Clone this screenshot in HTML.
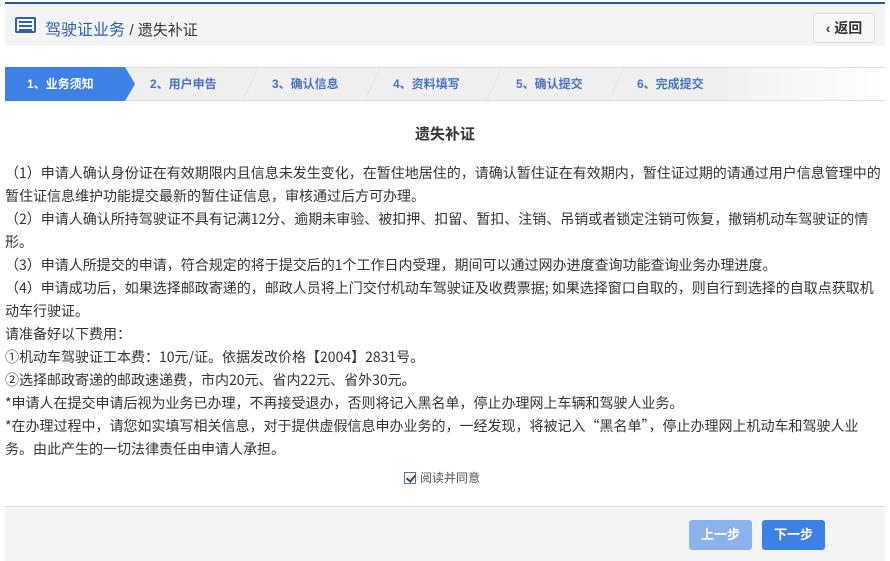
<!DOCTYPE html>
<html><head><meta charset="utf-8"><style>
*{margin:0;padding:0;box-sizing:border-box}
body{width:890px;height:561px;background:#fff;font-family:"Liberation Sans","Noto Sans CJK SC",sans-serif;position:relative;overflow:hidden}
.top{position:absolute;left:5px;top:2px;width:880px;height:2px;background:#2b56a8}
.hdr{position:absolute;left:5px;top:4px;width:880px;height:42px;background:#f4f4f4}
.hdr .ic{position:absolute;left:10px;top:13px;width:21px;height:16px;border:2px solid #2e5fb0;border-radius:2px;background:#fff}
.hdr .ic i{position:absolute;left:2px;width:13px;height:2px;background:#2e5fb0}
.hdr .t{position:absolute;left:40px;top:12px;font-size:16px;color:#2e5fb0}
.hdr .t span{color:#333;font-size:15px}
.back{position:absolute;left:808px;top:9px;width:62px;height:30px;border:1px solid #ddd;border-radius:3px;background:#f8f8f8;font-size:14px;font-weight:bold;color:#333;text-align:center;line-height:28px}
.steps{position:absolute;left:5px;top:67px;width:880px;height:34px;background:linear-gradient(to right,#efefef 80%,#fff);border-top:1px solid #ddd;border-bottom:1px solid #ddd}
.st{position:absolute;top:0;height:32px;line-height:32px;font-size:12px;font-weight:bold;color:#4a72c0}
.s1{position:absolute;left:0;top:-1px;width:120px;height:34px;background:#3d80e6;color:#fff;font-size:12px;font-weight:bold;line-height:34px;padding-left:22px}
.s1:after{content:"";position:absolute;right:-10px;top:0;border-left:10px solid #3d80e6;border-top:17px solid transparent;border-bottom:17px solid transparent}
.sep{position:absolute;top:0;width:1px;height:32px;background:#e4e4e4;transform:skewX(-25deg)}
h2{position:absolute;top:123px;left:0;width:890px;text-align:center;font-size:15px;font-weight:bold;color:#333}
.txt{position:absolute;left:5px;top:162px;width:880px;font-size:14px;line-height:23px;color:#333;font-family:"Noto Sans CJK SC","Liberation Sans",sans-serif}
.chk{position:absolute;left:404px;top:469px;font-size:12px;color:#555}
.chk b{display:inline-block;width:12px;height:12px;border:1px solid #4a72c0;vertical-align:-2px;margin-right:4px;position:relative}
.chk b:after{content:"";position:absolute;left:3px;top:0;width:4px;height:7px;border-right:2px solid #444;border-bottom:2px solid #444;transform:rotate(40deg)}
.foot{position:absolute;left:5px;top:506px;width:880px;height:55px;background:#f4f4f4;border-top:1px solid #ddd}
.btn{position:absolute;top:13px;width:63px;height:30px;border-radius:3px;color:#fff;font-size:13px;font-weight:bold;text-align:center;line-height:30px}
</style></head><body>
<div class="top"></div>
<div class="hdr"><div class="ic"><i style="top:2px"></i><i style="top:6px"></i><i style="top:10px"></i></div>
<div class="t">驾驶证业务 <span>/ 遗失补证</span></div>
<div class="back">‹ 返回</div></div>
<div class="steps">
<div class="s1">1、业务须知</div>
<div class="st" style="left:145px">2、用户申告</div><div class="sep" style="left:245px"></div>
<div class="st" style="left:267px">3、确认信息</div><div class="sep" style="left:367px"></div>
<div class="st" style="left:388px">4、资料填写</div><div class="sep" style="left:489px"></div>
<div class="st" style="left:511px">5、确认提交</div><div class="sep" style="left:611px"></div>
<div class="st" style="left:632px">6、完成提交</div>
</div>
<h2>遗失补证</h2>
<div class="txt">（1）申请人确认身份证在有效期限内且信息未发生变化，在暂住地居住的，请确认暂住证在有效期内，暂住证过期的请通过用户信息管理中的暂住证信息维护功能提交最新的暂住证信息，审核通过后方可办理。<br>
（2）申请人确认所持驾驶证不具有记满12分、逾期未审验、被扣押、扣留、暂扣、注销、吊销或者锁定注销可恢复，撤销机动车驾驶证的情形。<br>
（3）申请人所提交的申请，符合规定的将于提交后的1个工作日内受理，期间可以通过网办进度查询功能查询业务办理进度。<br>
（4）申请成功后，如果选择邮政寄递的，邮政人员将上门交付机动车驾驶证及收费票据; 如果选择窗口自取的，则自行到选择的自取点获取机动车行驶证。<br>
请准备好以下费用：<br>
①机动车驾驶证工本费：10元/证。依据发改价格【2004】2831号。<br>
②选择邮政寄递的邮政速递费，市内20元、省内22元、省外30元。<br>
*申请人在提交申请后视为业务已办理，不再接受退办，否则将记入黑名单，停止办理网上车辆和驾驶人业务。<br>
*在办理过程中，请您如实填写相关信息，对于提供虚假信息申办业务的，一经发现，将被记入“黑名单”，停止办理网上机动车和驾驶人业务。由此产生的一切法律责任由申请人承担。</div>
<div class="chk"><b></b>阅读并同意</div>
<div class="foot">
<div class="btn" style="left:684px;background:#8cb2ee">上一步</div>
<div class="btn" style="left:757px;background:#3d80e6">下一步</div>
</div>
</body></html>
